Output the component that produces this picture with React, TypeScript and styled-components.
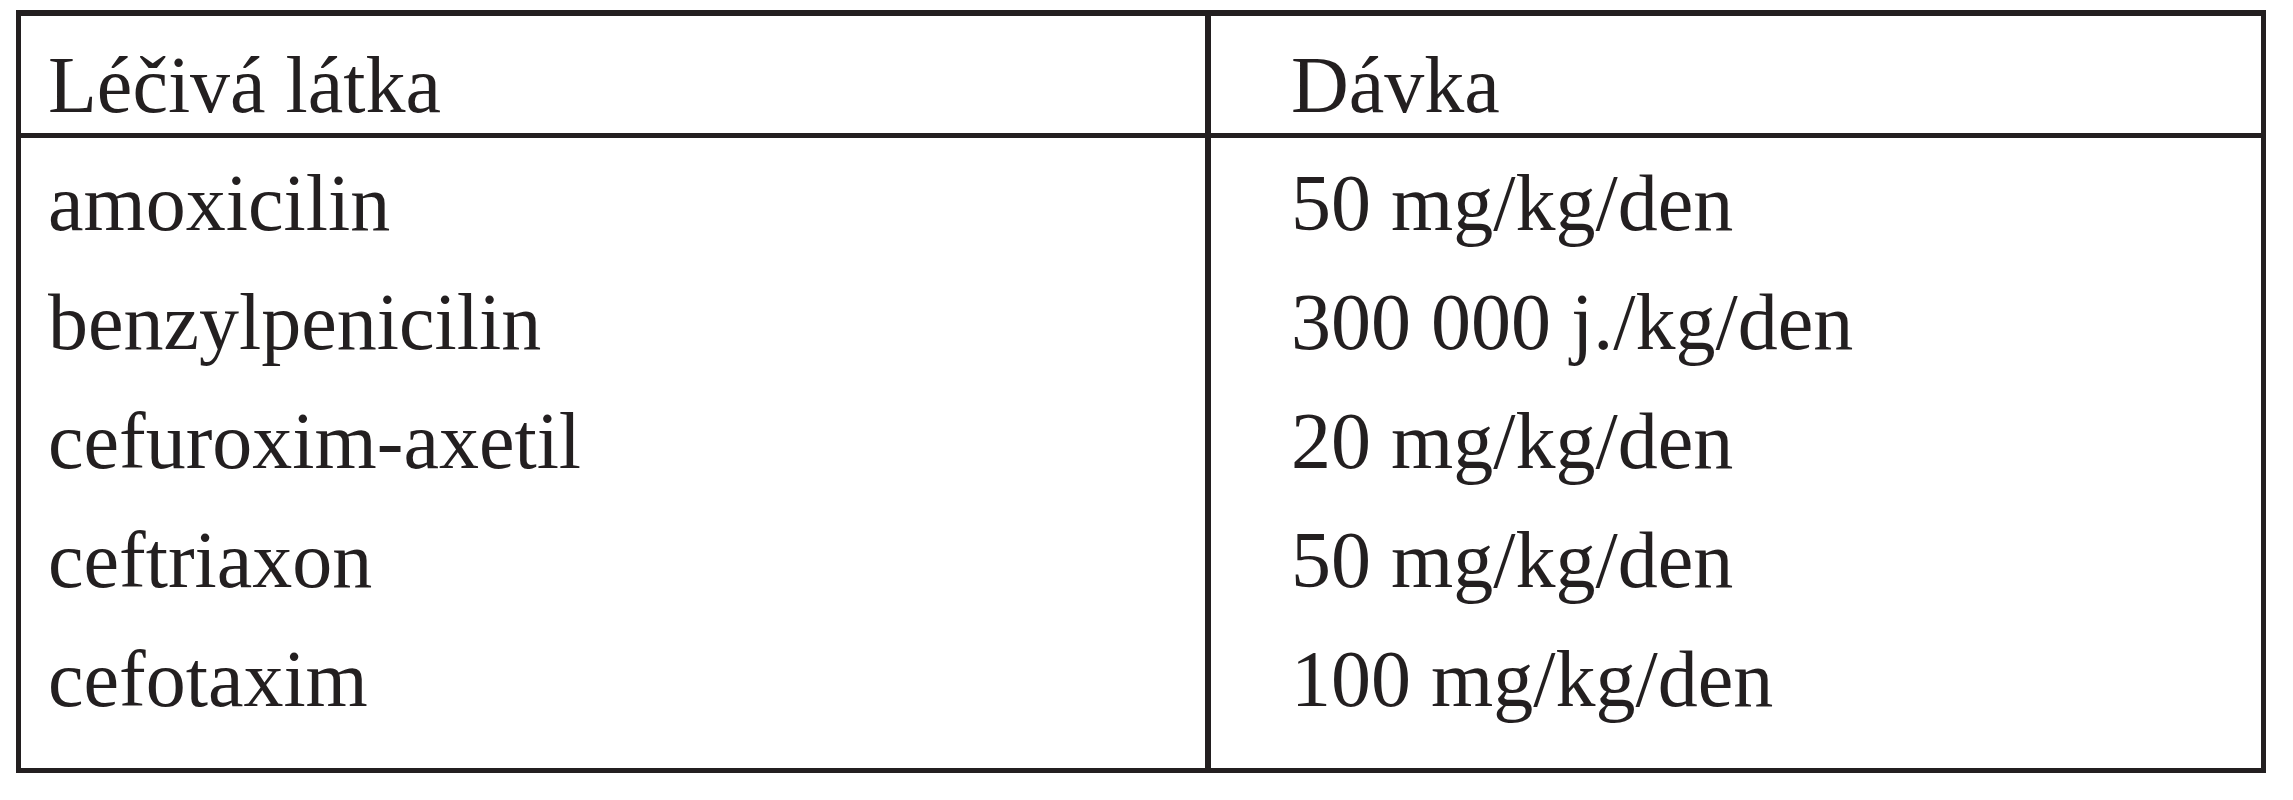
import styled, { createGlobalStyle } from "styled-components";

const GlobalStyle = createGlobalStyle`
  html, body {
    margin: 0;
    padding: 0;
    background: #ffffff;
  }
  * {
    box-sizing: border-box;
  }
`;

const Page = styled.div`
  padding: 10px 0 0 16px;
  width: 2293px;
  height: 800px;
  font-family: "Liberation Serif", "Times New Roman", serif;
  color: #231f20;
`;

const Table = styled.div`
  display: flex;
  width: 2250px;
  height: 763px;
  border-style: solid;
  border-color: #231f20;
  border-width: 6px 5px 5px 5px;
`;

const Column = styled.div<{ $width?: string; $divider?: boolean }>`
  display: flex;
  flex-direction: column;
  width: ${(p) => p.$width ?? "auto"};
  flex: ${(p) => (p.$width ? "none" : "1")};
  border-left: ${(p) => (p.$divider ? "6px solid #231f20" : "none")};
`;

const HeadCell = styled.div<{ $indent: number }>`
  height: 122px;
  padding: 21px 0 0 ${(p) => p.$indent}px;
  border-bottom: 5px solid #231f20;
  font-size: 80px;
  line-height: 96px;
  white-space: nowrap;
`;

const BodyCell = styled.div<{ $indent: number }>`
  flex: 1;
  padding: 5.5px 0 0 ${(p) => p.$indent}px;
`;

const Line = styled.div`
  height: 119px;
  font-size: 80px;
  line-height: 119px;
  white-space: nowrap;
`;

const rows = [
  { drug: "amoxicilin", dose: "50 mg/kg/den" },
  { drug: "benzylpenicilin", dose: "300 000 j./kg/den" },
  { drug: "cefuroxim-axetil", dose: "20 mg/kg/den" },
  { drug: "ceftriaxon", dose: "50 mg/kg/den" },
  { drug: "cefotaxim", dose: "100 mg/kg/den" },
];

export default function App() {
  return (
    <>
      <GlobalStyle />
      <Page>
        <Table>
          <Column $width="1184px">
            <HeadCell $indent={27}>Léčivá látka</HeadCell>
            <BodyCell $indent={27}>
              {rows.map((r) => (
                <Line key={r.drug}>{r.drug}</Line>
              ))}
            </BodyCell>
          </Column>
          <Column $divider>
            <HeadCell $indent={80}>Dávka</HeadCell>
            <BodyCell $indent={80}>
              {rows.map((r) => (
                <Line key={r.drug}>{r.dose}</Line>
              ))}
            </BodyCell>
          </Column>
        </Table>
      </Page>
    </>
  );
}
